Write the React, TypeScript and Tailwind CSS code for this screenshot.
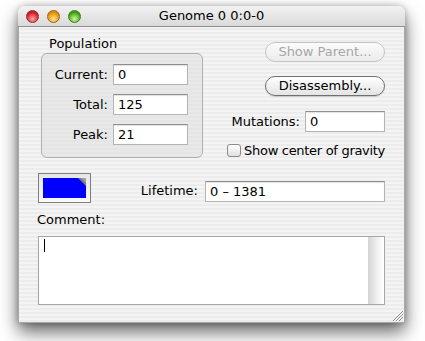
import React from 'react';

const font = "font-['DejaVu_Sans','Lucida_Grande',sans-serif]";

const TextField = ({ value, className = '' }: { value: string; className?: string }) => (
  <div
    className={`h-[21px] bg-white border border-[#b4b4b4] border-t-[#8e8e8e] pl-[4px] text-[13px] leading-[19px] text-black shadow-[inset_0_1px_1px_rgba(0,0,0,0.12)] ${className}`}
  >
    {value}
  </div>
);

const Light = ({ from, to, ring }: { from: string; to: string; ring: string }) => (
  <div
    className="w-[13px] h-[13px] rounded-full border"
    style={{ background: `radial-gradient(circle at 50% 72%, ${to} 0%, ${from} 70%)`, borderColor: ring }}
  />
);

const PopRow = ({ label, value }: { label: string; value: string }) => (
  <div className="flex items-center">
    <div className="w-[71px] text-right pr-[5px] text-[13px] text-black">{label}</div>
    <TextField value={value} className="w-[75px]" />
  </div>
);

export default function App() {
  return (
    <div className={`w-[425px] h-[341px] bg-white pt-[6px] pl-[18px] ${font}`}>
      <div className="w-[387px] h-[317px] rounded-t-[7px] shadow-[0_9px_18px_rgba(0,0,0,0.6),0_0_6px_rgba(0,0,0,0.25)] flex flex-col">
        {/* title bar */}
        <div className="relative h-[21px] rounded-t-[7px] bg-[linear-gradient(#f2f2f2,#dadada)] border-b border-[#8f8f8f] flex items-center pl-[8px] gap-[8px] shrink-0">
          <Light from="#d0141c" to="#ffa4a6" ring="#8c2a2a" />
          <Light from="#e08a00" to="#ffe48e" ring="#9a6410" />
          <Light from="#3c9e0c" to="#c8f8a0" ring="#3f7a1e" />
          <div className="absolute inset-0 flex items-center justify-center text-[13px] text-black pointer-events-none">
            Genome 0 0:0-0
          </div>
        </div>

        {/* body */}
        <div className="flex-1 relative border-x border-b border-[#a8a8a8] bg-[repeating-linear-gradient(0deg,#ececec_0px,#ececec_2px,#f4f4f4_2px,#f4f4f4_4px)]">
          <div className="flex">
            {/* population group */}
            <div className="ml-[22px] pt-[9px]">
              <div className="ml-[8px] h-[16px] leading-[16px] text-[13px] text-black">Population</div>
              <div className="mt-[1px] w-[162px] h-[105px] rounded-[6px] border border-[#b0b0b0] bg-[#e2e2e2]/70 pt-[10px] flex flex-col gap-[9px]">
                <PopRow label="Current:" value="0" />
                <PopRow label="Total:" value="125" />
                <PopRow label="Peak:" value="21" />
              </div>
            </div>

            {/* right controls */}
            <div className="ml-auto mr-[19px] pt-[15px] flex flex-col items-end">
              <button className="w-[120px] h-[20px] rounded-full border border-[#c4c4c4] bg-[linear-gradient(#fbfbfb,#ececec)] text-[13px] leading-[18px] text-[#a6a6a6]">
                Show Parent...
              </button>
              <button className="mt-[14px] w-[120px] h-[20px] rounded-full border border-[#707070] bg-[linear-gradient(#ffffff,#e4e4e4)] text-[13px] leading-[18px] text-black shadow-[0_1px_1px_rgba(0,0,0,0.15)]">
                Disassembly...
              </button>
              <div className="mt-[15px] flex items-center">
                <span className="text-[13px] text-black mr-[5px]">Mutations:</span>
                <TextField value="0" className="w-[80px]" />
              </div>
              <div className="mt-[9px] flex items-center">
                <div className="w-[14px] h-[13px] rounded-[3px] border border-[#8a8a8a] bg-[linear-gradient(#ffffff,#e0e0e0)] mr-[3px]" />
                <span className="text-[13px] tracking-[-0.3px] text-black">Show center of gravity</span>
              </div>
            </div>
          </div>

          {/* color well + lifetime */}
          <div className="mt-[12px] flex items-start">
            <div className="ml-[19px] w-[53px] h-[30px] border border-[#7e7e7e] bg-[linear-gradient(#e6e6e6,#fafafa)] p-[4px]">
              <div className="relative w-full h-full bg-[#0000ff]">
                <svg className="absolute top-0 right-0" width="8" height="8" viewBox="0 0 8 8">
                  <polygon points="0,0 8,0 8,8" fill="#7a7a7a" />
                  <polygon points="3,0 8,0 8,5" fill="#a0a0a0" />
                </svg>
              </div>
            </div>
            <div className="ml-auto mr-[19px] mt-[8px] flex items-center">
              <span className="text-[13px] text-black mr-[7px]">Lifetime:</span>
              <TextField value="0 – 1381" className="w-[180px]" />
            </div>
          </div>

          {/* comment */}
          <div className="mt-[9px] ml-[18px] h-[16px] leading-[16px] text-[13px] text-black">Comment:</div>
          <div className="mt-[8px] ml-[19px] w-[347px] h-[69px] border border-[#a6a6a6] bg-white flex">
            <div className="flex-1 pl-[5px] pt-[2px]">
              <div className="w-[1px] h-[13px] bg-black" />
            </div>
            <div className="w-[16px] h-full bg-[linear-gradient(90deg,#d4d4d4,#f2f2f2_60%,#ffffff)]" />
          </div>

          {/* resize grip */}
          <svg className="absolute right-[1px] bottom-[1px]" width="12" height="12" viewBox="0 0 12 12">
            <line x1="2" y1="12" x2="12" y2="2" stroke="#8a8a8a" strokeWidth="1" />
            <line x1="5" y1="12" x2="12" y2="5" stroke="#8a8a8a" strokeWidth="1" />
            <line x1="8" y1="12" x2="12" y2="8" stroke="#8a8a8a" strokeWidth="1" />
            <line x1="3" y1="12" x2="12" y2="3" stroke="#ffffff" strokeWidth="1" />
            <line x1="6" y1="12" x2="12" y2="6" stroke="#ffffff" strokeWidth="1" />
          </svg>
        </div>
      </div>
    </div>
  );
}
